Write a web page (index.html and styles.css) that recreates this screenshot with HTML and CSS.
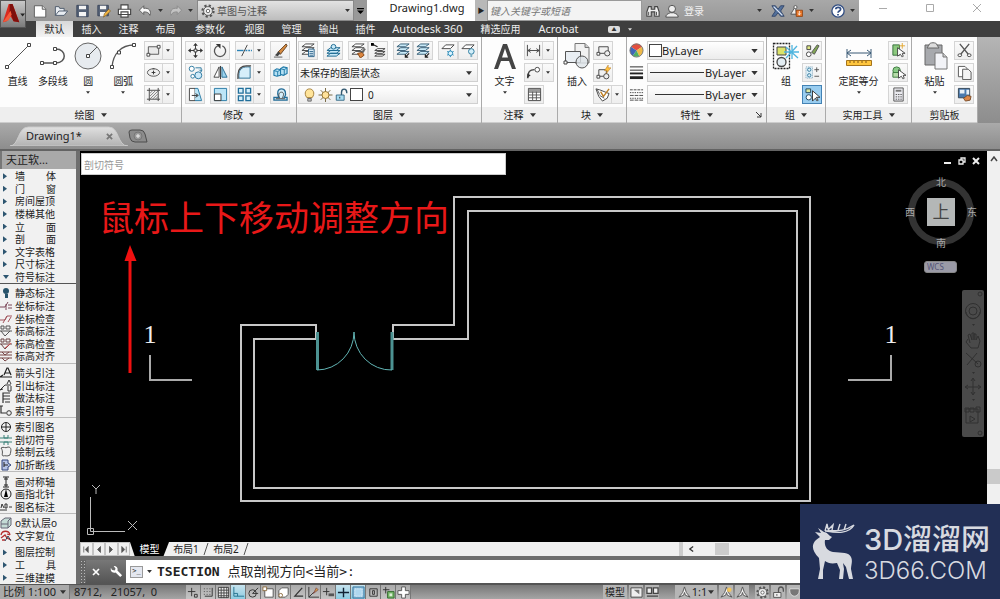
FILE: index.html
```html
<!DOCTYPE html>
<html lang="zh-CN">
<head>
<meta charset="utf-8">
<title>Drawing1.dwg</title>
<link rel="stylesheet" href="styles.css">
</head>
<body>
<svg class="sprite" aria-hidden="true">
  <symbol id="caret" viewBox="0 0 8 5"><path d="M0 0h8L4 5z" fill="currentColor"/></symbol>
  <symbol id="new" viewBox="0 0 16 16"><path d="M1 2h9l4 3.500v9.500H1z" fill="#fff" stroke="#555"/><path d="M10 2v4h4" fill="#ddd" stroke="#555"/></symbol>
  <symbol id="open" viewBox="0 0 16 16"><path d="M1 13V3h4l1 2h5v3M1 13l4-5h10l-4 5z" fill="#e9edf2" stroke="#465366"/></symbol>
  <symbol id="save" viewBox="0 0 16 16"><path d="M1.500 1.500h13v13h-13z" fill="#566276" stroke="#38445a"/><path d="M4 2h8v4H4zM4 9h8v5H4z" fill="#f4f4f4"/></symbol>
  <symbol id="saveas" viewBox="0 0 16 16"><path d="M1.500 1.500h12v12h-12z" fill="#566276" stroke="#38445a"/><path d="M4 2h7v4H4zM4 9h7v5H4z" fill="#f4f4f4"/><path d="M8 15l1-4 5-5 2 2-5 5z" fill="#efb343" stroke="#73521c" stroke-width=".7"/></symbol>
  <symbol id="print" viewBox="0 0 16 16"><path d="M4 6V1h8v5M1 6h14v6H1zM4 9h8v6H4z" fill="#fff" stroke="#444" stroke-width="1.300"/></symbol>
  <symbol id="undo" viewBox="0 0 16 16"><path d="M1 7l5-5v3c6-1 9 3 7 8-1-3-3-4-7-4v3z" fill="#f8f8f8" stroke="#555"/></symbol>
  <symbol id="redo" viewBox="0 0 16 16"><path d="M15 7l-5-5v3C4 4 1 8 3 13c1-3 3-4 7-4v3z" fill="#c3c3c3" stroke="#888"/></symbol>
  <symbol id="gear" viewBox="0 0 16 16"><circle cx="8" cy="8" r="6.300" fill="none" stroke="#555" stroke-width="2.600" stroke-dasharray="2.500 2.450"/><circle cx="8" cy="8" r="5" fill="#eee" stroke="#555"/><circle cx="8" cy="8" r="2" fill="#fff" stroke="#555"/></symbol>
  <symbol id="binoc" viewBox="0 0 16 16"><path d="M1 14V9l2-6h3v3h4V3h3l2 6v5h-5V9H6v5z" fill="#eee" stroke="#444" stroke-width="1.300"/><path d="M3 9v4M12 9v4" stroke="#444"/></symbol>
  <symbol id="user" viewBox="0 0 16 16"><circle cx="8" cy="5.500" r="4" fill="#eee" stroke="#444"/><path d="M1 15c0-4 4-4 5-5h4c1 1 5 1 5 5z" fill="#eee" stroke="#444"/></symbol>
  <symbol id="exchange" viewBox="0 0 16 16"><path d="M1 2h4l3 4 3-4h4l-4 6 4 6h-4l-3-4-3 4H1l4-6z" fill="#53709b" stroke="#2f4468"/><path d="M3 3l10 10" stroke="#dce7f5" stroke-width="1.500"/></symbol>
  <symbol id="cloud" viewBox="0 0 18 16"><path d="M7 2l-6 10h7z" fill="#eee" stroke="#444"/><circle cx="7" cy="3" r="2" fill="#fff" stroke="#444"/><path d="M8 7h8v8H8z" fill="#e97729" stroke="#8b3c0c"/><path d="M12 8v5M10 11l2 2 2-2" fill="none" stroke="#fff"/></symbol>
  <symbol id="help" viewBox="0 0 16 16"><circle cx="8" cy="8" r="7" fill="#fff" stroke="#334f83" stroke-width="1.500"/><path d="M5.500 6c0-3 5.500-3 5.500 0 0 2-3 2-3 4M8 11.500v1.700" fill="none" stroke="#334f83" stroke-width="2"/></symbol>

  <symbol id="line" viewBox="0 0 28 28"><path d="M3 25L25 3" stroke="#555" fill="none"/><path d="M1.500 23.500h3v3h-3zM23.500 1.500h3v3h-3z" fill="#fff" stroke="#444"/></symbol>
  <symbol id="pline" viewBox="0 0 28 28"><path d="M3 21h14c11 0 11-14 0-14" stroke="#555" stroke-width="1.500" fill="none"/><path d="M1.500 19.500h3v3h-3zM14.500 19.500h3v3h-3zM14.500 5.500h3v3h-3z" fill="#fff" stroke="#444"/></symbol>
  <symbol id="circle" viewBox="0 0 28 28"><circle cx="14" cy="14" r="13" fill="#e7ebef" stroke="#666"/><path d="M14 14l9-9" stroke="#555"/><path d="M12.500 12.500h3v3h-3z" fill="#fff" stroke="#444"/></symbol>
  <symbol id="arc" viewBox="0 0 28 28"><path d="M3 25C4 12 12 3 25 3" stroke="#555" stroke-width="1.300" fill="none"/><path d="M1.500 23.500h3v3h-3zM8.500 9h3v3h-3zM23.500 1.500h3v3h-3z" fill="#fff" stroke="#444"/></symbol>
  <symbol id="rect" viewBox="0 0 16 16"><path d="M2.500 4h11v8h-11z" fill="#e9e9e9" stroke="#555"/><path d="M1 11h3v3H1zM12 2.500h3v3h-3z" fill="#fff" stroke="#444"/></symbol>
  <symbol id="ellipse" viewBox="0 0 16 16"><ellipse cx="8" cy="8" rx="6.500" ry="4" fill="#eee" stroke="#555"/><path d="M8 6v4M6 8h4M7 4h2" stroke="#333"/></symbol>
  <symbol id="hatch" viewBox="0 0 16 16"><path d="M3.500 1v14M13 1v14M1 3.500h14M1 13h14" stroke="#444"/><path d="M4 7l3-3M4 10l6-6M4 13l9-9M7 13l6-6M10 13l3-3" stroke="#777"/></symbol>
  <symbol id="move" viewBox="0 0 16 16"><path d="M8 1v14M1 8h14" stroke="#333"/><path d="M8 0l2.500 3h-5zM8 16l2.500-3h-5zM0 8l3-2.500v5zM16 8l-3-2.500v5z" fill="#333"/><path d="M6.500 6.500h3v3h-3z" fill="#fff" stroke="#333"/></symbol>
  <symbol id="rotate" viewBox="0 0 16 16"><path d="M5 3a6 6 0 1 0 5 0" fill="none" stroke="#555" stroke-width="1.400"/><path d="M3 1h5v5z" fill="#333"/></symbol>
  <symbol id="trim" viewBox="0 0 16 16"><path d="M0 8h7" stroke="#2c83b6" stroke-width="1.500"/><path d="M9 8h7" stroke="#2c83b6" stroke-width="1.500" stroke-dasharray="2 1"/><path d="M5 14L11 2" stroke="#444"/></symbol>
  <symbol id="erase" viewBox="0 0 16 16"><path d="M5 10L14 1l1 2-7 9z" fill="#d68a3f" stroke="#644323"/><path d="M2 13l4-4 2 2-3 3z" fill="#444"/><path d="M1 15h9" stroke="#555"/></symbol>
  <symbol id="copy" viewBox="0 0 16 16"><circle cx="4" cy="4" r="2.700" fill="#fff" stroke="#2a779f"/><circle cx="11" cy="11" r="3.700" fill="#cdeafa" stroke="#2a779f"/><circle cx="5" cy="12" r="2" fill="#fff" stroke="#2a779f"/><path d="M8 3h6v4M12 5l2 2 1-2" stroke="#2a779f" fill="none"/></symbol>
  <symbol id="mirror" viewBox="0 0 16 16"><path d="M6.500 2v11H1z" fill="#fff" stroke="#444"/><path d="M9.500 2v11H15z" fill="#9cd3ee" stroke="#286b91"/><path d="M8 1v14" stroke="#333"/></symbol>
  <symbol id="fillet" viewBox="0 0 16 16"><path d="M2 14V11C2 5 5 2 11 2h3v12z" fill="#d6eefa" stroke="#2c6f94"/><path d="M1 15V10C1 4 5 1 10 1h5" fill="none" stroke="#444" stroke-width="1.300"/></symbol>
  <symbol id="explode" viewBox="0 0 16 16"><path d="M1 6l3-2 4 1v6l-4 1-3-1zM8 4l3-2 4 1v6l-4 2-3-1z" fill="#b6e1f4" stroke="#217ba9" stroke-width="1.200"/><path d="M1 6l4 1 3-2M5 7v5M8 4l4 1 3-2M12 5v6" stroke="#217ba9" fill="none"/></symbol>
  <symbol id="stretch" viewBox="0 0 16 16"><path d="M1.500 1.500h6v13h-6z" fill="#fff" stroke="#444"/><path d="M7.500 1.500h3l4 13h-7" fill="#bce5f7" stroke="#277aa4"/><path d="M4 9h6M8 7l3 2-3 2" stroke="#333" fill="none"/></symbol>
  <symbol id="scale" viewBox="0 0 16 16"><path d="M1.500 1.500h13v13h-13z" fill="#bce5f7" stroke="#277aa4"/><path d="M1.500 7.500h7v7h-7z" fill="#fff" stroke="#333"/></symbol>
  <symbol id="array" viewBox="0 0 16 16"><path d="M1.500 1.500h5v5h-5zM9.500 1.500h5v5h-5zM1.500 9.500h5v5h-5zM9.500 9.500h5v5h-5z" fill="#d5effb" stroke="#216f9b" stroke-width="1.400"/></symbol>
  <symbol id="offset" viewBox="0 0 16 16"><path d="M1 14h14v-3h-3c3-4 1-9-3-9S4 6 6 11H1z" fill="#d6effb" stroke="#246c97" stroke-width="1.400"/><path d="M3 12.500h5c-3-3-2-7 1-7s3 4 0 7h4" fill="none" stroke="#444"/></symbol>
  <symbol id="layers" viewBox="0 0 16 16"><path d="M1 12l4-3h9l-4 3zM1 8l4-3h9l-4 3zM1 4l4-3h9l-4 3z" fill="#fff" stroke="#444"/></symbol>
  <symbol id="layerprop" viewBox="0 0 16 16"><path d="M1 12l4-3h9l-4 3zM1 8l4-3h9l-4 3zM1 4l4-3h9l-4 3z" fill="#fff" stroke="#444"/><path d="M8 6.500h6v8H8z" fill="#e4f3fb" stroke="#2c638b"/><path d="M9 9h4M9 11h4M9 13h4" stroke="#2c638b"/></symbol>
  <symbol id="layerblue" viewBox="0 0 16 16"><path d="M1 14l4-3h10l-4 3zM1 11l4-3h10l-4 3zM1 8l4-3h10l-4 3z" fill="#c8e9f8" stroke="#1c6990"/><circle cx="8" cy="4" r="2.500" fill="#c8e9f8" stroke="#1c6990"/></symbol>
  <symbol id="layerbrush" viewBox="0 0 16 16"><path d="M1 12l4-3h9l-4 3zM1 8l4-3h9l-4 3zM1 4l4-3h9l-4 3z" fill="#fff" stroke="#444"/><path d="M7 11l5-1 2 3-4 3z" fill="#dc8741" stroke="#854514"/><path d="M12 10l3-4" stroke="#666" stroke-width="2"/></symbol>
  <symbol id="layerback" viewBox="0 0 16 16"><path d="M4 14l3-2h8l-3 2zM4 11l3-2h8l-3 2zM4 8l3-2h8l-3 2z" fill="#fff" stroke="#444"/><path d="M1 1l6 3" stroke="#222" stroke-width="1.300"/><path d="M0 0h3v3H0z"/></symbol>
  <symbol id="layerarrow" viewBox="0 0 16 16"><path d="M1 12l4-3h9l-4 3zM1 8l4-3h9l-4 3zM1 4l4-3h9l-4 3z" fill="#c8e9f8" stroke="#365e76"/><path d="M10 15l4-4M10 12v3h3" fill="none" stroke="#222" stroke-width="1.300"/></symbol>
  <symbol id="layersnow" viewBox="0 0 16 16"><path d="M1 6l4-4h9l-4 4z" fill="#fff" stroke="#444"/><path d="M10 7v8M6.500 9l7 4M13.500 9l-7 4" stroke="#2588b5"/><circle cx="10" cy="11" r="2.500" fill="#d9f3ff" stroke="#2588b5"/></symbol>
  <symbol id="layerbulb" viewBox="0 0 16 16"><path d="M1 6l4-4h9l-4 4z" fill="#fff" stroke="#444"/><circle cx="11" cy="9" r="3" fill="#d3effa" stroke="#25769b"/><path d="M10 12h2v3h-2z" fill="#7bacc0"/></symbol>
  <symbol id="bulb" viewBox="0 0 16 16"><path d="M5 11C1 6 4 1 8 1s7 5 3 10z" fill="#ffe49a" stroke="#9b752b"/><path d="M6 12h4v3H6z" fill="#bbb" stroke="#666"/></symbol>
  <symbol id="sun" viewBox="0 0 16 16"><path d="M8 0v16M0 8h16M2.500 2.500l11 11M13.500 2.500l-11 11" stroke="#695a31"/><circle cx="8" cy="8" r="4" fill="#ffe29b" stroke="#8a6925"/></symbol>
  <symbol id="lock" viewBox="0 0 16 16"><path d="M8 8V5c0-5 6-5 6 0v1" fill="none" stroke="#345970" stroke-width="1.600"/><path d="M2 8h9v6H2z" fill="#a9dcf1" stroke="#2e6380"/><path d="M6 10v2" stroke="#222"/></symbol>
  <symbol id="graylock" viewBox="0 0 16 16"><path d="M8 8V5c0-5 6-5 6 0v2" fill="none" stroke="#555" stroke-width="1.600"/><path d="M2 8h9v6H2z" fill="#eee" stroke="#444"/><path d="M6 10v2" stroke="#222"/></symbol>
  <symbol id="bigA" viewBox="0 0 28 28"><path d="M3 27L12 2h4l9 25h-4l-3-8h-8l-3 8zM11 15.500h6L14 6.500z" fill="#444"/></symbol>
  <symbol id="dim" viewBox="0 0 16 16"><path d="M1.500 2v12M14.500 2v12M2 8h12M5 6L2 8l3 2M11 6l3 2-3 2" stroke="#444" fill="none"/></symbol>
  <symbol id="leader" viewBox="0 0 16 16"><path d="M2 14C2 7 4 5 9 5" fill="none" stroke="#444" stroke-width="1.400"/><path d="M1 14l.500-5L5 11z" fill="#333"/><circle cx="12" cy="5" r="2.500" fill="#fff" stroke="#444"/></symbol>
  <symbol id="table" viewBox="0 0 16 16"><path d="M1.500 1.500h13v13h-13z" fill="#fff" stroke="#444"/><path d="M2 2h12v3H2z" fill="#999"/><path d="M1.500 5.500h13M1.500 8.500h13M1.500 11.500h13M6 5v9M10 5v9" stroke="#555"/></symbol>
  <symbol id="insert" viewBox="0 0 28 28"><path d="M12 1.500h10l4 4V21H12z" fill="#f1f1f1" stroke="#777"/><path d="M22 1.500v4h4" fill="#ccc" stroke="#777"/><path d="M2.500 9.500h15v11h-15z" fill="#e9eef3" stroke="#555"/><path d="M1 19h3v3H1z" fill="#fff" stroke="#444"/><circle cx="19" cy="20" r="6" fill="#dde3e8" fill-opacity=".8" stroke="#555"/></symbol>
  <symbol id="block" viewBox="0 0 16 16"><path d="M3 4h10v7H3z" fill="#f1f1f1" stroke="#444"/><path d="M1 10h3v3H1z" fill="#fff" stroke="#444"/><circle cx="12" cy="11" r="2.800" fill="#eee" stroke="#444"/></symbol>
  <symbol id="blockedit" viewBox="0 0 16 16"><path d="M3 5h8v7H3z" fill="#f1f1f1" stroke="#444"/><path d="M1 11h3v3H1z" fill="#fff" stroke="#444"/><circle cx="11" cy="12" r="2.800" fill="#eee" stroke="#444"/><path d="M13 0l-4 6h3l-1 3 5-6h-3z" fill="#ffbf3d" stroke="#ad721b" stroke-width=".5"/></symbol>
  <symbol id="attr" viewBox="0 0 16 16"><path d="M1 2l4 1 10 4-2 5-5 3-4-5z" fill="#fff" stroke="#444"/><path d="M6 5l3 5 6-8" fill="none" stroke="#bf8127" stroke-width="1.500"/><path d="M2 2l3 6M5 9l5 3" stroke="#555"/></symbol>
  <symbol id="wheel" viewBox="0 0 16 16"><path d="M8 8L2 4A7 7 0 0 1 14 4z" fill="#e34f3f"/><path d="M8 8l6-4a7 7 0 0 1-3 10z" fill="#efb947"/><path d="M8 8l3 6a7 7 0 0 1-7-.500z" fill="#4eae63"/><path d="M8 8l-4 5.500A7 7 0 0 1 2 4z" fill="#4066b7"/><circle cx="8" cy="8" r="7" fill="none" stroke="#777"/></symbol>
  <symbol id="weights" viewBox="0 0 16 16"><path d="M1 2h14M1 5.500h14" stroke="#222"/><path d="M1 9h14" stroke="#222" stroke-width="2"/><path d="M1 13.500h14" stroke="#222" stroke-width="3"/></symbol>
  <symbol id="dashes" viewBox="0 0 16 16"><path d="M1 3h14" stroke="#444" stroke-dasharray="3 1"/><path d="M1 6h14M1 12h14" stroke="#444" stroke-dasharray="1.500 1"/><path d="M1 9h14M1 14h14" stroke="#444" stroke-dasharray="4 1"/></symbol>
  <symbol id="group" viewBox="0 0 28 28"><path d="M1.500 1.500h16v25h-16z" fill="none" stroke="#222" stroke-width="1.300" stroke-dasharray="2 1"/><path d="M5 5h9v8H5z" fill="#dbe36a" stroke="#444"/><circle cx="9.500" cy="20" r="4.500" fill="#e3edf3" stroke="#444" stroke-width="1.300"/><path d="M12 10h15M20 3v14M14 5l12 11M14 16L25 4" stroke="#50b5df" stroke-width="1.300"/></symbol>
  <symbol id="gedit" viewBox="0 0 16 16"><path d="M2 3h4v4H2z" fill="#dfe784" stroke="#444"/><circle cx="4" cy="12" r="2.500" fill="#fff" stroke="#444"/><path d="M7 10l6-8 2 1-5 9z" fill="#81a554" stroke="#555"/></symbol>
  <symbol id="gplus" viewBox="0 0 16 16"><path d="M1 2h7v12H1z" fill="#ddeff8" stroke="#86a5b7" stroke-dasharray="1 1"/><circle cx="4.500" cy="5" r="1.800" fill="none" stroke="#397d9f"/><circle cx="4.500" cy="11" r="1.800" fill="none" stroke="#397d9f"/><path d="M10 5h5M12.500 2.500v5M10 12h5" stroke="#555"/></symbol>
  <symbol id="gselect" viewBox="0 0 16 16"><path d="M1 2h5v4H1z" fill="#dbe9a4" stroke="#23485d"/><circle cx="4" cy="11" r="2.800" fill="#fff" stroke="#23485d"/><path d="M8 4v11l3-3 2 3 1-1-2-3h4z" fill="#fff" stroke="#333"/></symbol>
  <symbol id="measure" viewBox="0 0 28 28"><path d="M2 7v9M26 7v9M2 11h24M6 8l-4 3 4 3M22 8l4 3-4 3" fill="none" stroke="#385975"/><path d="M1.500 18.500h25v5h-25z" fill="#ffc63e" stroke="#a5741c"/><path d="M5 19v2M9 19v2M13 19v2M17 19v2M21 19v2" stroke="#805415"/></symbol>
  <symbol id="quick" viewBox="0 0 16 16"><path d="M2 2h7v11H2z" fill="#8cc97e" stroke="#356f3c"/><path d="M7 5v9l3-2 2 3 1-1-1-3h3z" fill="#fff" stroke="#444"/><path d="M12 0v6M9 3h6" stroke="#e3a830"/></symbol>
  <symbol id="selectsim" viewBox="0 0 16 16"><circle cx="6" cy="6" r="4" fill="#8aca87" stroke="#3b7b3d"/><path d="M2 8h7v5H2z" fill="#b7dcaa" stroke="#3b7b3d"/><path d="M8 5v9l3-2 2 3 1-1-1-3h3z" fill="#fff" stroke="#444"/></symbol>
  <symbol id="calc" viewBox="0 0 16 16"><path d="M3 1h10v14H3z" fill="#e9e9ee" stroke="#555"/><path d="M5 3h6v2H5z" fill="#777"/><path d="M5 8h7M5 10.500h7M5 13h7" stroke="#555" stroke-dasharray="1.500 1"/></symbol>
  <symbol id="paste" viewBox="0 0 28 28"><path d="M4 3h17v20H4z" fill="#a7a9ad" stroke="#666"/><path d="M8 3c0-3 8-3 8 0l2 3H6z" fill="#ddd" stroke="#666"/><path d="M14 11h8l4 4v12H14z" fill="#f2f3f7" stroke="#777"/><path d="M22 11v4h4" fill="#ccc" stroke="#777"/></symbol>
  <symbol id="cut" viewBox="0 0 16 16"><path d="M3 1l9 11M13 1L4 12" stroke="#555" stroke-width="1.400"/><ellipse cx="3" cy="13" rx="2" ry="1.500" fill="#fff" stroke="#444"/><ellipse cx="13" cy="13" rx="2" ry="1.500" fill="#fff" stroke="#444"/></symbol>
  <symbol id="pages" viewBox="0 0 16 16"><path d="M1.500 1.500h7l2 2v9h-9z" fill="#fff" stroke="#555"/><path d="M6 4.500h6l3 3v8H6z" fill="#f3f3f3" stroke="#555"/></symbol>
  <symbol id="matchprop" viewBox="0 0 16 16"><path d="M1.500 1.500h12v10h-12z" fill="#4a79ad" stroke="#345"/><path d="M3 3h5v4H3zM10 3h3v5h-3z" fill="#e8f0f7"/><path d="M7 12l4-3 4 1-1 4-5 1z" fill="#dd8748" stroke="#7c4e2a"/></symbol>

  <symbol id="s-dot" viewBox="0 0 12 12"><circle cx="6" cy="4" r="3" fill="#28536a"/><path d="M5 7h3v4H5z" fill="#28536a"/></symbol>
  <symbol id="s-coord" viewBox="0 0 12 12"><path d="M0 7h5l3-5M6 10V4M8 5h4M8 8h4" stroke="#7a4556" fill="none"/></symbol>
  <symbol id="s-check" viewBox="0 0 12 12"><path d="M0 7h5l2-4h5M3 10L7 3M8 9l3-5" stroke="#a3555d" fill="none"/></symbol>
  <symbol id="s-elev" viewBox="0 0 12 12"><path d="M0 6h12M1 6l4 5 5-5M1 1h3v3H1zM6 1h4v3H6z" stroke="#555" fill="none"/></symbol>
  <symbol id="s-elevcheck" viewBox="0 0 12 12"><path d="M0 6h12M1 6l4 5 5-5M1 1h3v3H1zM6 1h4v3H6z" stroke="#6b4444" fill="none"/><path d="M5 10l6-5" stroke="#d95d5d"/></symbol>
  <symbol id="s-elevline" viewBox="0 0 12 12"><path d="M0 2h12M0 5h12M0 8h12M2 2l3 3 4-3M2 8l3 3 4-3" stroke="#744" fill="none"/></symbol>
  <symbol id="s-a" viewBox="0 0 12 12"><path d="M4 8L7 1h1l3 7M5 6h5M0 10h12M0 10l3-2" stroke="#222" fill="none" stroke-width="1.200"/></symbol>
  <symbol id="s-lead" viewBox="0 0 12 12"><path d="M0 10L5 5h6M0 10l3-1M7 4l2-4 2 4M8 6v5h3V6" stroke="#333" fill="none"/></symbol>
  <symbol id="s-list" viewBox="0 0 12 12"><path d="M3 11V1h7M3 4h7M3 7h7M5 10h5" stroke="#333" fill="none" stroke-width="1.200"/></symbol>
  <symbol id="s-index" viewBox="0 0 12 12"><path d="M1 1v7h5M0 1h3" stroke="#333" fill="none" stroke-width="1.200"/><circle cx="9" cy="8" r="2.300" fill="none" stroke="#333"/></symbol>
  <symbol id="s-name" viewBox="0 0 12 12"><circle cx="6" cy="6" r="4.500" fill="none" stroke="#222"/><path d="M1 6h10M6 2v8" stroke="#222"/></symbol>
  <symbol id="s-section" viewBox="0 0 12 12"><path d="M0 4h12M0 8h12M4 1v3h4V1M4 11V8h4v3" stroke="#3b8178" fill="none"/></symbol>
  <symbol id="s-cloud" viewBox="0 0 12 12"><path d="M1 2c3-2 4 1 7-1 4 0 3 4 2 8-3 2-5 0-7 1C1 9 4 6 1 2z" stroke="#555" fill="none"/></symbol>
  <symbol id="s-break" viewBox="0 0 12 12"><path d="M2 1h6v3l3 2-3 2v3H2z" stroke="#33457d" fill="#b6c3e6"/><path d="M4 3v5M4 6h4" stroke="#222"/></symbol>
  <symbol id="s-axis" viewBox="0 0 12 12"><path d="M3 1h6M3 11h6M6 1v10M4 3h4M4 9h4" stroke="#222"/></symbol>
  <symbol id="s-north" viewBox="0 0 12 12"><circle cx="6" cy="6" r="5" fill="none" stroke="#222"/><path d="M6 1L4 9h4z"/></symbol>
  <symbol id="s-title" viewBox="0 0 12 12"><path d="M0 9h7M1 7l1-4 2 4M5 3v4h2V3zM9 6h3" stroke="#333" fill="none"/></symbol>
  <symbol id="s-cube" viewBox="0 0 12 12"><path d="M1 4l4-3h6l-3 3v7H1zM8 4l3-3v7l-3 3" fill="#c3dbd5" stroke="#667"/><path d="M1 7h7" stroke="#667"/></symbol>
  <symbol id="s-reset" viewBox="0 0 12 12"><path d="M1 5C2 0 9 0 10 5M10 5L7 4M1 8l4-3 2 3 4 2M2 10h3" stroke="#b52f2f" fill="none" stroke-width="1.300"/><path d="M5 11l3-5 3 5" stroke="#345" fill="none"/></symbol>

  <symbol id="snapinfer" viewBox="0 0 14 14"><path d="M1 6h8M5 2v9M8 9h3v3H8z" stroke="#333" fill="none"/></symbol>
  <symbol id="snap" viewBox="0 0 14 14"><path d="M2 3h8M2 6h8M2 9h8" stroke="#444" stroke-dasharray="1 2"/><path d="M11 2v9H3" stroke="#333" fill="none"/></symbol>
  <symbol id="grid" viewBox="0 0 14 14"><path d="M1.500 1.500h11v11h-11zM4.500 1v12M7.500 1v12M10.500 1v12M1 4.500h12M1 7.500h12M1 10.500h12" stroke="#444" fill="#eee"/></symbol>
  <symbol id="ortho" viewBox="0 0 14 14"><path d="M2 1v10h11M2 8h4v3" stroke="#24718f" fill="none"/></symbol>
  <symbol id="polar" viewBox="0 0 14 14"><circle cx="6" cy="8" r="4" stroke="#333" fill="none"/><path d="M6 8l6-6M6 8h6" stroke="#333"/></symbol>
  <symbol id="osnap" viewBox="0 0 14 14"><path d="M3 3h9v9H3z" stroke="#555" fill="#fff"/><path d="M1 1h4v4H1z" fill="#fff" stroke="#8c6b3d"/></symbol>
  <symbol id="osnap3" viewBox="0 0 14 14"><path d="M2 5l3-3h7v7l-3 3H2z" stroke="#555" fill="#fff"/><circle cx="4" cy="10" r="2" fill="#fff" stroke="#8c6b3d"/></symbol>
  <symbol id="angle" viewBox="0 0 14 14"><path d="M11 2L3 11h9" stroke="#333" fill="none" stroke-width="1.300"/></symbol>
  <symbol id="ducs" viewBox="0 0 14 14"><path d="M2 1v11h11M2 12L10 4" stroke="#333" fill="none"/><path d="M7 8l3-6 2 2z" fill="#dda33a" stroke="#855"/></symbol>
  <symbol id="dyn" viewBox="0 0 14 14"><path d="M1 6h7M5 2v8" stroke="#333"/><path d="M7 8h6v3H7z" fill="#555"/></symbol>
  <symbol id="plus" viewBox="0 0 14 14"><path d="M1 7h12M7 2v10" stroke="#123" stroke-width="1.500"/></symbol>
  <symbol id="trans" viewBox="0 0 14 14"><path d="M1 1h12v12H1z" fill="#8cbfdf" stroke="#37729a"/><path d="M3 3h8v8H3z" fill="#aed7ef" stroke="#fff" stroke-dasharray="1 1"/></symbol>
  <symbol id="prop" viewBox="0 0 14 14"><path d="M3 3h8v8H3zM6 5h2v4H6z" fill="none" stroke="#333"/></symbol>
  <symbol id="cycle" viewBox="0 0 14 14"><path d="M1 4h7M4 1v7" stroke="#333"/><path d="M6 6h7v7H6z" fill="#73b566" stroke="#356c31"/><path d="M8 8h3v3H8z" fill="#dcefd8"/></symbol>
  <symbol id="anno" viewBox="0 0 14 14"><path d="M5 1h4v4h4v4H9v4H5V9H1V5h4z" fill="#fff" stroke="#555"/></symbol>
  <symbol id="scalefig" viewBox="0 0 14 14"><path d="M7 1l2 6 4 5-5-2-1-3-1 3-5 2 4-5z" fill="#f5f5f5" stroke="#555"/></symbol>
  <symbol id="scalelit" viewBox="0 0 14 14"><path d="M7 1l2 6 4 5-5-2-1-3-1 3-5 2 4-5z" fill="#f5f5f5" stroke="#555"/><circle cx="10" cy="4" r="2.500" fill="#f2c55c"/></symbol>
  <symbol id="modelpage" viewBox="0 0 14 14"><path d="M1 2h12v10H1z" fill="#eee" stroke="#444"/><path d="M4 4l6 5V4z" fill="#777"/></symbol>
  <symbol id="splitpage" viewBox="0 0 14 14"><path d="M1 2h5v6H1zM8 2h5v6H8zM1 11h12" fill="#eee" stroke="#444" stroke-width="1.400"/></symbol>
  <symbol id="wrench" viewBox="0 0 14 14"><path d="M4 1l2 3-1 2-3-1-1-2c-1 4 2 6 5 5l5 5 2-2-5-5c1-3-1-5-4-5z" fill="#fff"/></symbol>
</svg>

<div class="app">
<header class="titlebar">
  <button class="app-button" aria-label="应用程序菜单"><svg viewBox="0 0 26 26"><path d="M2 21L8 2h4l7 19-6-1-3-5-4 5z" fill="#d9291e"/><path d="M9 2h3l7 19-6-1-4-10z" fill="#7e100d"/><path d="M2 21l6-2 3-6-1-4z" fill="#f45a3a"/><path d="M20 12h5l-2.500 3z" fill="#222"/></svg></button>
  <nav class="quick-access" aria-label="快速访问工具栏">
    <button aria-label="新建"><svg><use href="#new"/></svg></button>
    <button aria-label="打开"><svg><use href="#open"/></svg></button>
    <button aria-label="保存"><svg><use href="#save"/></svg></button>
    <button aria-label="另存为"><svg><use href="#saveas"/></svg></button>
    <button aria-label="打印"><svg><use href="#print"/></svg></button>
    <button aria-label="放弃"><svg><use href="#undo"/></svg></button>
    <button class="mini" aria-label="放弃列表"><svg class="caret"><use href="#caret"/></svg></button>
    <button aria-label="重做"><svg><use href="#redo"/></svg></button>
    <button class="mini" aria-label="重做列表"><svg class="caret"><use href="#caret"/></svg></button>
  </nav>
  <div class="workspace-pick"><svg class="i14"><use href="#gear"/></svg><select aria-label="工作空间"><option>草图与注释</option></select><svg class="caret"><use href="#caret"/></svg></div>
  <button class="customize" aria-label="自定义"><svg class="bar" viewBox="0 0 8 7"><path d="M0 0h8v1.500H0zM0 3h8L4 7z"/></svg></button>
  <div class="doc-title">Drawing1.dwg</div>
  <button class="expand" aria-label="展开搜索">▶</button>
  <input class="search" type="search" aria-label="搜索" placeholder="键入关键字或短语">
  <div class="account">
    <button aria-label="查找"><svg class="i14"><use href="#binoc"/></svg></button>
    <button class="sign-in"><svg class="i14"><use href="#user"/></svg>登录</button>
    <button class="mini push" aria-label="帐户"><svg class="caret"><use href="#caret"/></svg></button>
    <button aria-label="Exchange"><svg class="i14"><use href="#exchange"/></svg></button>
    <button aria-label="连接"><svg class="i14"><use href="#cloud"/></svg></button>
    <button class="mini" aria-label="连接选项"><svg class="caret"><use href="#caret"/></svg></button>
    <button class="help" aria-label="帮助"><svg class="i14"><use href="#help"/></svg></button>
    <button class="mini" aria-label="帮助选项"><svg class="caret"><use href="#caret"/></svg></button>
  </div>
  <div class="window-buttons">
    <button aria-label="最小化"><svg viewBox="0 0 10 10"><path d="M1 5.500h8"/></svg></button>
    <button aria-label="最大化"><svg viewBox="0 0 10 10"><path d="M1.500 1.500h7v7h-7z"/></svg></button>
    <button aria-label="关闭"><svg viewBox="0 0 10 10"><path d="M1 1l8 8M9 1L1 9"/></svg></button>
  </div>
</header>

<nav class="ribbon-tabs" aria-label="功能区">
  <button class="on">默认</button><button>插入</button><button>注释</button><button>布局</button><button class="w3">参数化</button><button>视图</button><button>管理</button><button>输出</button><button>插件</button><button class="w12">Autodesk 360</button><button class="w4">精选应用</button><button class="w7">Acrobat</button>
  <button class="pill" aria-label="最小化功能区"><span>▲</span></button><button class="mini" aria-label="功能区选项"><svg class="caret"><use href="#caret"/></svg></button>
</nav>

<div class="ribbon">
  <section class="panel p-draw"><div class="body">
    <button class="big"><svg><use href="#line"/></svg>直线</button>
    <button class="big"><svg><use href="#pline"/></svg>多段线</button>
    <button class="big"><svg><use href="#circle"/></svg>圆<svg class="caret"><use href="#caret"/></svg></button>
    <button class="big"><svg><use href="#arc"/></svg>圆弧<svg class="caret"><use href="#caret"/></svg></button>
    <div class="stack">
      <button class="tool drop" aria-label="矩形"><svg><use href="#rect"/></svg><i><svg class="caret"><use href="#caret"/></svg></i></button>
      <button class="tool drop" aria-label="椭圆"><svg><use href="#ellipse"/></svg><i><svg class="caret"><use href="#caret"/></svg></i></button>
      <button class="tool drop" aria-label="图案填充"><svg><use href="#hatch"/></svg><i><svg class="caret"><use href="#caret"/></svg></i></button>
    </div></div>
    <button class="name">绘图<svg class="caret"><use href="#caret"/></svg></button>
  </section>
  <section class="panel p-modify"><div class="body">
    <div class="stack"><button class="tool" aria-label="移动"><svg><use href="#move"/></svg></button><button class="tool" aria-label="复制"><svg><use href="#copy"/></svg></button><button class="tool" aria-label="拉伸"><svg><use href="#stretch"/></svg></button></div>
    <div class="stack"><button class="tool" aria-label="旋转"><svg><use href="#rotate"/></svg></button><button class="tool" aria-label="镜像"><svg><use href="#mirror"/></svg></button><button class="tool" aria-label="缩放"><svg><use href="#scale"/></svg></button></div>
    <div class="stack"><button class="tool drop" aria-label="修剪"><svg><use href="#trim"/></svg><i><svg class="caret"><use href="#caret"/></svg></i></button><button class="tool drop" aria-label="圆角"><svg><use href="#fillet"/></svg><i><svg class="caret"><use href="#caret"/></svg></i></button><button class="tool drop" aria-label="阵列"><svg><use href="#array"/></svg><i><svg class="caret"><use href="#caret"/></svg></i></button></div>
    <div class="stack"><button class="tool" aria-label="删除"><svg><use href="#erase"/></svg></button><button class="tool" aria-label="分解"><svg><use href="#explode"/></svg></button><button class="tool" aria-label="偏移"><svg><use href="#offset"/></svg></button></div></div>
    <button class="name">修改<svg class="caret"><use href="#caret"/></svg></button>
  </section>
  <section class="panel p-layer"><div class="body"><div class="stack fill">
    <div class="row">
      <span><button class="tool" aria-label="图层特性"><svg><use href="#layerprop"/></svg></button></span>
      <span><button class="tool" aria-label="置为当前"><svg><use href="#layerblue"/></svg></button></span>
      <span><button class="tool" aria-label="匹配图层"><svg><use href="#layerbrush"/></svg></button><button class="tool" aria-label="上一个图层"><svg><use href="#layerback"/></svg></button></span>
      <span><button class="tool" aria-label="隔离"><svg><use href="#layerarrow"/></svg></button><button class="tool" aria-label="取消隔离"><svg><use href="#layerarrow"/></svg></button></span>
      <span><button class="tool" aria-label="冻结"><svg><use href="#layersnow"/></svg></button><button class="tool" aria-label="关闭图层"><svg><use href="#layerbulb"/></svg></button></span>
    </div>
    <div class="combo"><select aria-label="图层状态"><option>未保存的图层状态</option></select><svg class="caret"><use href="#caret"/></svg></div>
    <div class="combo icons"><svg><use href="#bulb"/></svg><svg><use href="#sun"/></svg><svg><use href="#lock"/></svg><b class="swatch"></b><select aria-label="图层"><option>0</option></select><svg class="caret"><use href="#caret"/></svg></div>
  </div></div>
    <button class="name">图层<svg class="caret"><use href="#caret"/></svg></button>
  </section>
  <section class="panel p-anno"><div class="body">
    <button class="big"><svg><use href="#bigA"/></svg>文字<svg class="caret"><use href="#caret"/></svg></button>
    <div class="stack"><button class="tool drop" aria-label="标注"><svg><use href="#dim"/></svg><i><svg class="caret"><use href="#caret"/></svg></i></button><button class="tool drop" aria-label="引线"><svg><use href="#leader"/></svg><i><svg class="caret"><use href="#caret"/></svg></i></button><button class="tool" aria-label="表格"><svg><use href="#table"/></svg></button></div></div>
    <button class="name">注释<svg class="caret"><use href="#caret"/></svg></button>
  </section>
  <section class="panel p-block"><div class="body">
    <button class="big"><svg><use href="#insert"/></svg>插入</button>
    <div class="stack"><button class="tool" aria-label="创建块"><svg><use href="#block"/></svg></button><button class="tool" aria-label="编辑块"><svg><use href="#blockedit"/></svg></button><button class="tool drop" aria-label="编辑属性"><svg><use href="#attr"/></svg><i><svg class="caret"><use href="#caret"/></svg></i></button></div></div>
    <button class="name">块<svg class="caret"><use href="#caret"/></svg></button>
  </section>
  <section class="panel p-prop"><div class="body"><div class="stack fill">
    <div class="prop"><svg><use href="#wheel"/></svg><div class="combo"><b class="swatch"></b><select aria-label="颜色"><option>ByLayer</option></select><svg class="caret"><use href="#caret"/></svg></div></div>
    <div class="prop"><svg><use href="#weights"/></svg><div class="combo"><hr><select class="short" aria-label="线宽"><option>ByLayer</option></select><svg class="caret"><use href="#caret"/></svg></div></div>
    <div class="prop"><svg><use href="#dashes"/></svg><div class="combo"><hr class="inset"><select class="short" aria-label="线型"><option>ByLayer</option></select><svg class="caret"><use href="#caret"/></svg></div></div>
  </div></div>
    <button class="name">特性<svg class="caret"><use href="#caret"/></svg><svg class="launcher" viewBox="0 0 8 8"><path d="M1 1l5 5M6 2v4H2" fill="none" stroke="#333"/></svg></button>
  </section>
  <section class="panel p-group"><div class="body">
    <button class="big"><svg><use href="#group"/></svg>组</button>
    <div class="stack"><button class="tool" aria-label="解除编组"><svg><use href="#gedit"/></svg></button><button class="tool" aria-label="组编辑"><svg><use href="#gplus"/></svg></button><button class="tool pressed" aria-label="组选择"><svg><use href="#gselect"/></svg></button></div></div>
    <button class="name">组<svg class="caret"><use href="#caret"/></svg></button>
  </section>
  <section class="panel p-util"><div class="body">
    <button class="big"><svg><use href="#measure"/></svg>定距等分<svg class="caret"><use href="#caret"/></svg></button>
    <div class="stack"><button class="tool" aria-label="快速选择"><svg><use href="#quick"/></svg></button><button class="tool" aria-label="选择类似"><svg><use href="#selectsim"/></svg></button><button class="tool" aria-label="计算器"><svg><use href="#calc"/></svg></button></div></div>
    <button class="name">实用工具<svg class="caret"><use href="#caret"/></svg></button>
  </section>
  <section class="panel p-clip"><div class="body">
    <button class="big"><svg><use href="#paste"/></svg>粘贴<svg class="caret"><use href="#caret"/></svg></button>
    <div class="stack"><button class="tool" aria-label="剪切"><svg><use href="#cut"/></svg></button><button class="tool" aria-label="复制剪裁"><svg><use href="#pages"/></svg></button><button class="tool" aria-label="特性匹配"><svg><use href="#matchprop"/></svg></button></div></div>
    <div class="name">剪贴板</div>
  </section>
</div>

<div class="file-tabs">
  <button class="file-tab"><svg class="shape" viewBox="0 0 128 20" preserveAspectRatio="none"><defs><linearGradient id="ft" x2="0" y2="1"><stop stop-color="#e0e0e0"/><stop offset="1" stop-color="#b2b2b2"/></linearGradient></defs><path d="M0 20c10 0 8-19 20-19h87c12 0 9 19 21 19z" fill="url(#ft)" stroke="#ccc"/></svg><span>Drawing1*</span><svg class="x" viewBox="0 0 8 8"><path d="M1 1l6 6M7 1L1 7" stroke="#777" stroke-width="2"/></svg></button>
  <button class="add-tab" aria-label="新图形"><svg viewBox="0 0 20 14"><path d="M1 3q0-2 3-2h8q4 0 5 4l2 8H7q-4 0-5-4z" fill="#8c8c8c" stroke="#4c4c4c"/><circle cx="10" cy="7" r="4" fill="#999" stroke="#777"/><path d="M10 5v4M8 7h4" stroke="#eee"/></svg></button>
</div>

<main class="main">
  <aside class="side">
    <h1>天正软...</h1>
    <ul>
      <li><button><i></i><span>墙</span><span>体</span></button></li>
      <li><button><i></i><span>门</span><span>窗</span></button></li>
      <li><button><i></i><span>房间屋顶</span></button></li>
      <li><button><i></i><span>楼梯其他</span></button></li>
      <li><button><i></i><span>立</span><span>面</span></button></li>
      <li><button><i></i><span>剖</span><span>面</span></button></li>
      <li><button><i></i><span>文字表格</span></button></li>
      <li><button><i></i><span>尺寸标注</span></button></li>
      <li class="open"><button><i></i><span>符号标注</span></button></li>
      <li class="rule dark"></li>
      <li><button><svg><use href="#s-dot"/></svg><span>静态标注</span></button></li>
      <li><button><svg><use href="#s-coord"/></svg><span>坐标标注</span></button></li>
      <li><button><svg><use href="#s-check"/></svg><span>坐标检查</span></button></li>
      <li><button><svg><use href="#s-elev"/></svg><span>标高标注</span></button></li>
      <li><button><svg><use href="#s-elevcheck"/></svg><span>标高检查</span></button></li>
      <li><button><svg><use href="#s-elevline"/></svg><span>标高对齐</span></button></li>
      <li class="rule"></li>
      <li><button><svg><use href="#s-a"/></svg><span>箭头引注</span></button></li>
      <li><button><svg><use href="#s-lead"/></svg><span>引出标注</span></button></li>
      <li><button><svg><use href="#s-list"/></svg><span>做法标注</span></button></li>
      <li><button><svg><use href="#s-index"/></svg><span>索引符号</span></button></li>
      <li class="rule"></li>
      <li><button><svg><use href="#s-name"/></svg><span>索引图名</span></button></li>
      <li><button><svg><use href="#s-section"/></svg><span>剖切符号</span></button></li>
      <li><button><svg><use href="#s-cloud"/></svg><span>绘制云线</span></button></li>
      <li><button><svg><use href="#s-break"/></svg><span>加折断线</span></button></li>
      <li class="rule"></li>
      <li><button><svg><use href="#s-axis"/></svg><span>画对称轴</span></button></li>
      <li><button><svg><use href="#s-north"/></svg><span>画指北针</span></button></li>
      <li><button><svg><use href="#s-title"/></svg><span>图名标注</span></button></li>
      <li class="rule"></li>
      <li><button><svg><use href="#s-cube"/></svg><span>o默认层o</span></button></li>
      <li><button><svg><use href="#s-reset"/></svg><span>文字复位</span></button></li>
      <li class="rule blank"></li>
      <li><button><i></i><span>图层控制</span></button></li>
      <li><button><i></i><span>工</span><span>具</span></button></li>
      <li><button><i></i><span>三维建模</span></button></li>
    </ul>
  </aside>

  <div class="work">
    <div class="view">
      <div class="canvas">
        <svg class="drawing" viewBox="80 151 907 391" preserveAspectRatio="xMinYMin meet">
          <path class="wall" d="M316 325H241V501H810V197H454V325H393V339H468V211H797V488H254V339H316Z"/>
          <g class="door"><path class="leaf" d="M317.500 332v38M392 332v38"/><path d="M317 370A37 38 0 0 0 354 332A37 38 0 0 0 392 370"/></g>
          <path class="mark" d="M150 355V380H192M891 355V380H848"/>
          <text class="num" x="150" y="343">1</text><text class="num" x="891" y="343">1</text>
          <path class="arrow" d="M128.500 373V261H124.500L130 245L136.500 261H131.500V373Z"/>
          <text class="note" x="99" y="231">鼠标上下移动调整方向</text>
          <path class="ucs" d="M90.500 497V531.500H125M87.500 528.500h6v6h-6zM92 485l4 4 4-4M96 489v5M128 521l9 9M137 521l-9 9"/>
        </svg>
        <input class="hint" type="text" aria-label="当前命令" value="剖切符号">
        <div class="doc-buttons"><button aria-label="最小化图形"><svg viewBox="0 0 8 8"><path d="M0 6h7" stroke-width="2"/></svg></button><button aria-label="还原图形"><svg viewBox="0 0 8 8"><path d="M1 3h4v4H1zM3 3V1h4v4H5" stroke-width="1.300"/></svg></button><button aria-label="关闭图形"><svg viewBox="0 0 8 8"><path d="M1 1l6 6M7 1L1 7" stroke-width="2"/></svg></button></div>
        <div class="cube"><span>北</span><span>西</span><b>上</b><span>东</span><span>南</span></div>
        <button class="wcs">WCS</button>
        <div class="nav-bar"><svg viewBox="0 0 22 147"><g fill="none" stroke="#303030"><circle cx="18" cy="4" r="2"/><circle cx="11" cy="21" r="7.500"/><circle cx="11" cy="21" r="4"/><path d="M4 22c2 9 12 9 14 0M6 49l-2 3 5 6h7l2-7-2-5-2 4v-6h-2v6-7h-2v7l-2-6-2 1 2 8M4 63l12 11M15 63L5 75"/><circle cx="16" cy="74" r="3"/><path d="M11 89v15M4 97h14M9 91l2-3 2 3M9 102l2 3 2-3M6 95l-3 2 3 2M16 95l3 2-3 2M4 119h12v14H4zM3 118h4v4H3zM8 118h4v4H8zM14 117h4v5h-4zM8 126l5 3-5 3z"/><circle cx="18" cy="143" r="2"/></g><path d="M10 34h3l-1.500 2zM10 82h3l-1.500 2zM10 109h3l-1.500 2z" fill="#303030"/></svg></div>
      </div>
      <div class="vscroll"><svg viewBox="0 0 8 6"><path d="M1 5l3-4 3 4" fill="none" stroke="#444" stroke-width="1.500"/></svg><div class="track"><i></i></div></div>
    </div>
    <div class="layouts">
      <div class="steps"><button aria-label="第一个"><svg viewBox="0 0 8 8"><path d="M1 0v8M7 0L3 4l4 4z"/></svg></button><button aria-label="上一个"><svg viewBox="0 0 8 8"><path d="M6 0L2 4l4 4z"/></svg></button><button aria-label="下一个"><svg viewBox="0 0 8 8"><path d="M2 0l4 4-4 4z"/></svg></button><button aria-label="最后一个"><svg viewBox="0 0 8 8"><path d="M7 0v8M1 0l4 4-4 4z"/></svg></button></div>
      <button class="layout on">模型</button><button class="layout">布局1</button><svg class="slash" viewBox="0 0 6 14"><path d="M5 1L1 13"/></svg><button class="layout">布局2</button><svg class="slash" viewBox="0 0 6 14"><path d="M5 1L1 13"/></svg>
      <div class="hscroll"><b></b><svg viewBox="0 0 6 8"><path d="M5 1L1 4l4 3" fill="none" stroke="#333" stroke-width="1.500"/></svg><i></i></div>
    </div>
    <form class="command">
      <span class="grip"></span>
      <button type="button" aria-label="关闭命令行"><svg viewBox="0 0 8 8"><path d="M1 1l6 6M7 1L1 7" stroke="#fff" stroke-width="1.700"/></svg></button>
      <button type="button" aria-label="自定义命令行"><svg class="wr"><use href="#wrench"/></svg></button>
      <label class="prompt" for="cmd"><span class="term">&gt;_</span><svg class="caret"><use href="#caret"/></svg><span><b>TSECTION</b> 点取剖视方向&lt;当前&gt;:</span></label>
      <input id="cmd" type="text" autocomplete="off">
    </form>
  </div>
</main>

<footer class="status">
  <button class="ratio">比例 1:100<svg class="caret"><use href="#caret"/></svg></button>
  <output>8712,&nbsp;&nbsp; 21057,&nbsp; 0</output>
  <div class="toggles">
    <button aria-label="推断约束"><svg><use href="#snapinfer"/></svg></button><button aria-label="捕捉"><svg><use href="#snap"/></svg></button><button aria-label="栅格"><svg><use href="#grid"/></svg></button><button class="on" aria-label="正交"><svg><use href="#ortho"/></svg></button><button aria-label="极轴"><svg><use href="#polar"/></svg></button><button aria-label="对象捕捉"><svg><use href="#osnap"/></svg></button><button aria-label="三维捕捉"><svg><use href="#osnap3"/></svg></button><button aria-label="追踪"><svg><use href="#angle"/></svg></button><button aria-label="动态 UCS"><svg><use href="#ducs"/></svg></button><button aria-label="动态输入"><svg><use href="#dyn"/></svg></button><button class="on" aria-label="线宽"><svg><use href="#plus"/></svg></button><button class="on" aria-label="透明度"><svg><use href="#trans"/></svg></button><button aria-label="快捷特性"><svg><use href="#prop"/></svg></button><button aria-label="选择循环"><svg><use href="#cycle"/></svg></button><button aria-label="注释监视器"><svg><use href="#anno"/></svg></button>
  </div>
  <div class="right">
    <button class="txt">模型</button><button aria-label="模型空间"><svg><use href="#modelpage"/></svg></button><button aria-label="快速查看"><svg><use href="#splitpage"/></svg></button>
    <button class="txt scale"><svg><use href="#scalefig"/></svg>1:1<svg class="caret"><use href="#caret"/></svg></button>
    <button aria-label="注释可见性"><svg><use href="#scalelit"/></svg></button><button aria-label="自动缩放"><svg><use href="#scalefig"/></svg></button>
    <button class="gap" aria-label="切换工作空间"><svg><use href="#gear"/></svg></button><button aria-label="锁定"><svg><use href="#graylock"/></svg></button><button aria-label="硬件加速"><svg viewBox="0 0 14 14"><path d="M2 3h10c1 6-3 8-5 8S1 9 2 3z" fill="#777" stroke="#ddd"/></svg></button>
  </div>
</footer>
</div>

<div class="brand">
  <svg viewBox="0 0 44 60"><path d="M3 10l6 1-3-5 6 4c3 0 4 3 8 5l-3 3h-4c-1 6 2 11 8 12 9 1 16 0 18 5 2 4 0 8 0 12l2 10h-4l-3-12-3-4 1 6-1 10h-4l1-9-3-7c-6 1-9 0-12-2l-2 9v9H6l2-10-1-11C0 29-1 23 4 18l4-3z" fill="#d8dae0"/><path d="M13 9l2-7 1 5M16 8l5-5-1 5M13 9c9-1 17 2 29-6-5 9-17 8-28 6M26 8l2-6M32 8l2-6" stroke="#d8dae0" stroke-width="1.400" fill="none"/></svg>
  <div><strong>3D溜溜网</strong><span>3D66.COM</span></div>
</div>
</body>
</html>
```
FILE: styles.css
```css
* { box-sizing: border-box; }
body { margin: 0; background: #6e6e6e; color: #222; font: 10px/12px "Noto Sans", "Noto Sans CJK SC", sans-serif; }
button, select, input { margin: 0; padding: 0; border: 0; background: none; color: inherit; font: inherit; border-radius: 0; }
button { display: inline-flex; align-items: center; justify-content: center; white-space: nowrap; }
select { appearance: none; min-width: 0; flex: 1; }
i { font-style: normal; }
svg { flex: none; display: block; }
.sprite { position: absolute; width: 0; height: 0; }
.caret { width: 6px; height: 4px; color: #333; }
.app { min-height: 100vh; display: flex; flex-direction: column; position: relative; }

/* title bar */
.titlebar { display: flex; height: 21px; background: linear-gradient(#a8a8a8, #989898); }
.app-button { width: 26px; height: 28px; flex: none; background: linear-gradient(#c8c8c8, #7b7b7b); border: 1px solid #555; position: relative; z-index: 1; }
.app-button svg { width: 25px; height: 25px; }
.quick-access { width: 171px; display: flex; align-items: center; padding-left: 4px; gap: 1px; }
.quick-access button { width: 20px; }
.quick-access button svg { width: 15px; height: 14px; }
.quick-access .mini { width: 8px; }
.titlebar .caret, .titlebar button svg.caret { width: 5px; height: 3px; }
.workspace-pick { width: 157px; display: flex; align-items: center; gap: 2px; padding: 0 3px; background: linear-gradient(#e2e2e2, #bdbdbd); border: 1px solid #888; color: #555; }
.i14 { width: 14px; height: 14px; }
.customize { width: 13px; background: #999; }
.customize .bar { width: 7px; height: 6px; }
.doc-title { width: 108px; background: #fff; text-align: center; font-size: 11px; line-height: 16px; padding-left: 12px; }
.expand { width: 12px; font-size: 7px; background: #b8b8b8; }
.search { width: 155px; background: #f3f3f3; border: 1px solid #999; padding: 0 2px; font-style: italic; appearance: none; }
.search::placeholder { color: #777; opacity: 1; }
.account { width: 217px; display: flex; align-items: center; gap: 5px; padding: 0 4px; }
.sign-in { gap: 5px; color: #f2f2f2; }
.push { margin-left: auto; margin-right: 4px; }
.account .help { margin-left: 12px; }
.window-buttons { flex: 1; display: flex; justify-content: space-around; background: #fff; padding: 0 0 6px; }
.window-buttons svg { width: 10px; height: 10px; fill: none; stroke: #aaa; }

/* ribbon tabs */
.ribbon-tabs { display: flex; height: 16px; padding-left: 36px; background: #3f3f3f; color: #eee; }
.ribbon-tabs button { width: 37px; line-height: 16px; }
.ribbon-tabs .on { background: linear-gradient(#d8d8d8, #f3f3f3); color: #222; }
.ribbon-tabs .w3 { width: 52px; }
.ribbon-tabs .w12 { width: 87px; font-size: 11px; }
.ribbon-tabs .w4 { width: 59px; }
.ribbon-tabs .w7 { width: 57px; font-size: 11px; }
.ribbon-tabs .pill { margin-left: 14px; width: 26px; }
.pill span { width: 12px; height: 7px; border-radius: 2px; background: #ddd; color: #333; font-size: 5px; line-height: 7px; }
.ribbon-tabs .mini { width: 6px; }
.mini .caret { width: 4px; height: 3px; }
.ribbon-tabs .caret { color: #ddd; }

/* ribbon */
.ribbon { display: flex; height: 86px; background: linear-gradient(#b5b5b5, #8d8d8d); }
.panel { display: flex; flex-direction: column; border-right: 1px solid #aaa; background: #fdfdfd; }
.body { flex: 1; display: flex; padding: 4px 3px 0; }
.name { height: 16px; background: #eee; border-bottom: 1px solid #ccc; display: flex; align-items: center; justify-content: center; gap: 6px; position: relative; }
.name .launcher { position: absolute; right: 3px; width: 8px; height: 8px; }
.big { flex-direction: column; justify-content: flex-start; padding-top: 1px; flex: 1 1 0; min-width: 0; }
.big svg { width: 28px; height: 28px; margin-bottom: 5px; }
.big .caret { width: 4px; height: 3px; margin: 4px 0 0; }
.stack { display: flex; flex-direction: column; gap: 3px; align-items: flex-start; }
.fill { flex: 1; align-items: stretch; }
.tool { width: 20px; height: 19px; border: 1px solid #d5d5d5; background: linear-gradient(#fafafa, #eee); }
.tool svg { width: 15px; height: 15px; }
.tool.drop { width: 30px; justify-content: flex-start; padding-left: 1px; }
.tool i { height: 17px; flex: 1; margin-left: 1px; border-left: 1px solid #d5d5d5; display: flex; align-items: center; justify-content: center; }
.tool i .caret { width: 4px; height: 3px; }
.tool.pressed { background: #99cdf0; border-color: #4382b4; }
.row { display: flex; justify-content: space-between; }
.row span { display: flex; }
.combo { height: 19px; border: 1px solid #d0d0d0; background: linear-gradient(#fff, #ececec); display: flex; align-items: center; padding: 0 5px 0 1px; }
.icons { gap: 1px; padding-left: 3px; }
.icons > svg:not(.caret) { width: 15px; height: 14px; }
.icons select { padding-left: 4px; }
.swatch { width: 13px; height: 13px; border: 1px solid #444; background: #fff; flex: none; }
.prop { display: flex; align-items: center; gap: 3px; }
.prop > svg { width: 15px; height: 15px; }
.prop .combo { flex: 1; font-size: 11px; min-width: 0; }
.prop .caret { width: 7px; height: 4px; }
.combo hr { flex: 1; margin: 0 1px; border: 0; border-top: 1px solid #333; }
.combo .inset { margin-left: 6px; }
.combo .short { flex: none; width: 46px; }
.p-draw { width: 182px; } .p-draw .body { padding-right: 7px; padding-left: 0; } .p-draw .stack { margin-left: 3px; }
.p-modify { width: 115px; } .p-modify .body { justify-content: space-between; padding-right: 6px; }
.p-layer { width: 185px; } .p-layer .body { padding-left: 1px; }
.p-anno { width: 76px; }
.p-block { width: 69px; }
.p-prop { width: 140px; } .p-prop .body { padding: 4px 2px 0; }
.p-group { width: 59px; }
.p-util { width: 86px; }
.p-clip { width: 66px; }

/* drawing tabs */
.file-tabs { display: flex; align-items: center; height: 28px; padding-left: 10px; background: linear-gradient(#aaa, #8d8d8d); border-bottom: 2px solid #636363; }
.file-tab { position: relative; width: 118px; height: 20px; font-size: 11px; padding: 0 6px 0 16px; justify-content: space-between; }
.file-tab .shape { position: absolute; inset: 0; width: 100%; height: 100%; }
.file-tab span, .file-tab .x { position: relative; }
.file-tab .x { width: 7px; height: 7px; margin-right: 9px; }
.add-tab svg { width: 20px; height: 14px; }

/* tool menu */
.main { flex: 1; display: flex; min-height: 0; }
.side { width: 76px; background: #f1f1f1; display: flex; flex-direction: column; }
.side h1 { margin: 0; padding-left: 4px; font-size: 11px; font-weight: 400; line-height: 18px; background: #a9a9a9; border-left: 2px solid #777; }
.side ul { flex: 1; margin: 0; padding: 1px 0 0; list-style: none; display: flex; flex-direction: column; }
.side li { flex: 1; display: flex; }
.side button { width: 56px; justify-content: flex-start; }
.side button > svg { width: 12px; height: 12px; margin-right: 3px; }
.side i { width: 4px; height: 6px; margin: 0 8px 0 3px; background: #2d5570; clip-path: polygon(0 0, 100% 50%, 0 100%); }
.side span + span { margin-left: auto; }
.side .open i { width: 6px; height: 4px; margin-right: 6px; clip-path: polygon(0 0, 100% 0, 50% 100%); }
.side .rule { flex: 0 0 4px; border-top: 1px solid #bbb; }
.side .dark { border-color: #555; }
.side .blank { border-color: transparent; }

/* drawing area */
.work { flex: 1; min-width: 0; margin-left: 4px; display: flex; flex-direction: column; }
.view { flex: 1; display: flex; min-height: 0; }
.canvas { flex: 1; position: relative; background: #000; overflow: hidden; }
.drawing { position: absolute; inset: 0; width: 100%; height: 100%; fill: none; }
.wall { stroke: #c8c8c8; stroke-width: 2; }
.door { stroke: #62b5b5; }
.leaf { stroke: #4c9292; stroke-width: 3; }
.mark { stroke: #aaa; stroke-width: 2; }
.num { fill: #eee; font: 26px "Liberation Serif", serif; text-anchor: middle; }
.arrow { fill: #f01010; }
.note { fill: #e81818; font: 35px "Noto Sans CJK SC", sans-serif; }
.ucs { stroke: #bbb; }
.hint { position: absolute; left: 1px; top: 2px; width: 425px; height: 22px; background: #fff; border: 1px solid #ccc; padding-left: 2px; color: #999; }
.doc-buttons { position: absolute; right: 7px; top: 6px; display: flex; gap: 6px; }
.doc-buttons svg { width: 8px; height: 8px; fill: none; stroke: #eee; }
.cube { position: absolute; right: 13px; top: 28px; width: 66px; height: 66px; border: 7px solid #333; border-radius: 50%; display: grid; grid-template: 12px 28px 12px / 12px 28px 12px; place-content: center; place-items: center; color: #aaa; font-family: "Noto Sans CJK SC", sans-serif; }
.cube span:nth-child(1), .cube span:nth-child(5) { grid-column: 2; }
.cube span:nth-child(1) { margin-top: -20px; }
.cube span:nth-child(5) { margin-top: 22px; }
.cube span:nth-child(2) { grid-column: 1; margin-left: -22px; }
.cube span:nth-child(4) { margin-right: -22px; }
.cube b { width: 28px; height: 28px; background: #b4b7b7; color: #444; font-size: 17px; line-height: 26px; font-weight: 400; text-align: center; }
.wcs { position: absolute; right: 30px; top: 110px; width: 33px; height: 12px; border: 1px solid #888; border-radius: 3px; background: #9a9aa6; color: #555577; font-size: 8px; justify-content: flex-start; padding-left: 2px; }
.nav-bar { position: absolute; right: 3px; top: 139px; background: #4a4a4a; border-radius: 2px; }
.nav-bar svg { width: 22px; height: 147px; }
.vscroll { width: 13px; background: #f0f0f0; display: flex; flex-direction: column; align-items: center; padding-top: 5px; }
.vscroll svg { width: 8px; height: 6px; }
.track { flex: 1; align-self: stretch; display: flex; flex-direction: column; justify-content: flex-end; padding-bottom: 58px; }
.track i { height: 15px; background: #cacaca; }

.layouts { display: flex; height: 14px; background: #f0f0f0; }
.steps { display: flex; width: 50px; }
.steps button { flex: 1; border: 1px solid #c4c4c4; }
.steps svg { width: 6px; height: 7px; fill: #555; stroke: #555; }
.layout { width: 34px; }
.slash { width: 6px; height: 14px; stroke: #555; }
.layout.on { background: #000; color: #fff; width: 39px; clip-path: polygon(0 0, 100% 0, 86% 100%, 12% 100%); }
.hscroll { margin-left: auto; width: 308px; display: flex; align-items: center; margin-right: 13px; }
.hscroll b { width: 4px; height: 14px; background: #ccc; margin-right: 6px; }
.hscroll svg { width: 5px; height: 8px; }
.hscroll i { width: 14px; height: 12px; background: #ccc; margin-left: 21px; }

.command { display: flex; height: 24px; margin-top: 4px; background: #fff; border-bottom: 1px solid #555; }
.command button { width: 20px; background: linear-gradient(#777, #555); }
.command button svg { width: 8px; height: 8px; }
.command button .wr { width: 13px; height: 13px; }
.grip { width: 6px; background: radial-gradient(circle, #bbb 0 1px, #666 1px) 0 0 / 3px 3px; }
.prompt { display: flex; align-items: center; gap: 4px; padding-left: 4px; font: 13px/20px "DejaVu Sans Mono", "Noto Sans CJK SC", monospace; }
.prompt .caret { width: 5px; height: 3px; margin-right: 1px; }
.term { width: 13px; height: 12px; border: 1px solid #999; background: #e4e7ef; font-size: 7px; line-height: 9px; text-align: center; }
.command input { flex: 1; min-width: 0; outline: 0; }

/* status bar */
.status { height: 15px; display: flex; align-items: center; background: linear-gradient(#777, #a5a5a5); border-top: 1px solid #555; }
.ratio { width: 70px; height: 14px; gap: 4px; background: #aaa; border-right: 1px solid #777; font-size: 11px; }
.status output { width: 116px; padding-left: 4px; font-size: 11px; }
.toggles { display: flex; }
.status .toggles button { width: 15px; height: 14px; border-right: 1px solid #777; background: linear-gradient(#aaa, #c5c5c5); }
.status .toggles .on { background: linear-gradient(#c7e3ee, #8ccbe0); }
.status button svg:not(.caret) { width: 13px; height: 13px; }
.right { margin-left: auto; width: 397px; display: flex; gap: 2px; }
.right button { width: 14px; height: 14px; background: #b5b5b5; }
.right .txt { width: 24px; }
.right .scale { width: 42px; margin-left: 14px; gap: 1px; font-size: 11px; }
.right .gap { margin-left: 4px; }

/* logo block */
.brand { position: fixed; right: 0; bottom: 0; width: 200px; height: 95px; background: #222f55; color: #d8dae0; display: flex; align-items: center; gap: 8px; padding-left: 12px; z-index: 2; }
.brand svg { width: 44px; height: 60px; }
.brand div { display: flex; flex-direction: column; padding-top: 2px; }
.brand strong { font: 500 29px/36px "Inter", "Noto Sans CJK SC", sans-serif; white-space: nowrap; }
.brand span { font: 300 24px/26px "Inter", sans-serif; }
```
